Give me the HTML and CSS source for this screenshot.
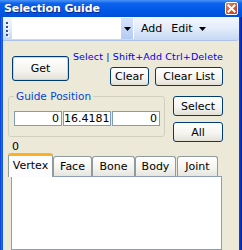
FILE: index.html
```html
<!DOCTYPE html>
<html>
<head>
<meta charset="utf-8">
<link rel="stylesheet" href="styles.css">
</head>
<body>
<div class="win">
  <div class="title">
    <span class="title-text">Selection Guide</span>
    <div class="close">
      <svg width="13" height="13" viewBox="0 0 13 13"><path d="M3.5 3.5 L9.5 9.5 M9.5 3.5 L3.5 9.5" stroke="#fff" stroke-width="2" stroke-linecap="square"/></svg>
    </div>
  </div>
  <div class="frame">
    <div class="bl"></div>
    <div class="client">
      <div class="toolbar">
        <div class="grip"><i></i><i></i><i></i><i></i></div>
        <div class="combo">
          <div class="combo-field"></div>
          <div class="combo-btn"><svg width="7" height="4" viewBox="0 0 7 4"><path d="M0 0H7L3.5 4Z" fill="#000"/></svg></div>
        </div>
        <span class="tb-item">Add</span>
        <span class="tb-item">Edit <svg class="dd" width="7" height="4" viewBox="0 0 7 4"><path d="M0 0H7L3.5 4Z" fill="#000"/></svg></span>
      </div>
      <div class="main">
        <div class="row1">
          <div class="btn get">Get</div>
          <div class="r1-right">
            <div class="hint">Select | Shift+Add Ctrl+Delete</div>
            <div class="btn-row">
              <div class="btn clear">Clear</div>
              <div class="btn clear-list">Clear List</div>
            </div>
          </div>
        </div>
        <div class="row2">
          <div class="left-col">
            <fieldset class="group">
              <legend>Guide Position</legend>
              <div class="fields">
                <div class="field">0</div>
                <div class="field">16.4181</div>
                <div class="field">0</div>
              </div>
            </fieldset>
            <div class="count">0</div>
          </div>
          <div class="side">
            <div class="btn side-btn">Select</div>
            <div class="btn side-btn">All</div>
          </div>
        </div>
        <div class="tabs">
          <div class="tab sel">Vertex</div>
          <div class="tab w-face">Face</div>
          <div class="tab w-bone">Bone</div>
          <div class="tab w-body">Body</div>
          <div class="tab w-joint">Joint</div>
        </div>
        <div class="panel"></div>
      </div>
    </div>
    <div class="br"></div>
  </div>
</div>
</body>
</html>
```
FILE: styles.css
```css
* { box-sizing: border-box; }
html, body { margin: 0; padding: 0; }
body {
  width: 242px; height: 250px; overflow: hidden;
  font-family: "DejaVu Sans", sans-serif; font-size: 10px; color: #000;
}
.win { width: 242px; height: 250px; display: flex; flex-direction: column; }
.title {
  height: 17px; flex: none;
  display: flex; align-items: center; justify-content: space-between;
  padding: 0 4px 0 4px;
  background: linear-gradient(to bottom, #4A93F7 0%, #0C62EC 20%, #0158E6 60%, #0050D8 100%);
}
.title-text {
  color: #fff; font-weight: bold; font-size: 11px; letter-spacing: -0.1px;
  text-shadow: 1px 1px 0 #0A2B8F;
}
.close {
  width: 13px; height: 13px; margin-top: -1px;
  border: 1px solid #fff; border-radius: 2px;
  background: linear-gradient(135deg, #E88A66 0%, #D8572F 50%, #C23B12 100%);
  display: flex;
}
.close svg { display: block; margin: -1px; }
.frame { flex: 1; display: flex; min-height: 0; }
.bl { width: 3px; background: linear-gradient(to right, #0836C8, #1A66F0, #0A55E0); }
.br { width: 3px; background: linear-gradient(to right, #0A50DA, #0832C8, #001C96); }
.client { flex: 1; background: #ECE9D8; display: flex; flex-direction: column; min-width: 0; }
.toolbar {
  height: 24px; flex: none;
  display: flex; align-items: center;
  background: linear-gradient(to bottom, #F3F7FE 0%, #E4EDFB 45%, #C6D8F4 100%);
  border-bottom: 1px solid #AFC3E6;
  border-radius: 0 0 3px 0;
}
.grip { width: 9px; display: flex; flex-direction: column; gap: 2px; padding-left: 3px; }
.grip i { width: 2px; height: 2px; background: #2C4C9C; box-shadow: 1px 1px 0 #fff; display: block; }
.combo { display: flex; width: 122px; height: 21px; margin-left: 0; }
.combo-field { flex: 1; background: #fff; }
.combo-btn {
  width: 13px; display: flex; align-items: center; justify-content: center;
  background: linear-gradient(to bottom, #D6E3FB, #B5CBF4);
  border-right: 1px solid #fff;
}
.combo-btn svg { display: block; }
.tb-item { font-size: 11px; margin-left: 7px; display: flex; align-items: center; }
.tb-item:last-child { margin-left: 9px; }
.tb-item .dd { margin-left: 6px; }
.main { flex: 1; display: flex; flex-direction: column; padding: 0 16px 0 5px; min-height: 0; }
.btn {
  border: 1px solid #003C74; border-radius: 3px;
  background: linear-gradient(to bottom, #FFFFFF 0%, #F4F3EE 60%, #E3E0D6 100%);
  display: flex; align-items: center; justify-content: center;
  font-size: 11px; white-space: nowrap;
}
.row1 { display: flex; margin-top: 10px; }
.get { width: 68px; height: 25px; margin: 5px 0 0 4px; box-shadow: inset 0 0 0 1px #BFD3F2; }
.r1-right { flex: 1; display: flex; flex-direction: column; margin-left: 4px; }
.hint { color: #0000F0; height: 12px; line-height: 12px; white-space: nowrap; font-size: 9.5px; letter-spacing: 0.15px; }
.btn-row { display: flex; justify-content: flex-end; gap: 6px; margin-top: 4px; }
.clear { width: 39px; height: 19px; }
.clear-list { width: 68px; height: 19px; }
.row2 { display: flex; margin-top: 4px; }
.left-col { display: flex; flex-direction: column; }
.group {
  margin: 0; width: 157px;
  border: 1px solid #D0D0BF; border-radius: 3px;
  padding: 9px 4px 10px 5px;
}
.group legend {
  color: #0046D5; font-size: 10.5px; line-height: 12px;
  padding: 0 2px; margin-left: 0;
}
.fields { display: flex; gap: 1px; }
.field {
  width: 48px; height: 15px; background: #fff; border: 1px solid #7F9DB9;
  text-align: right; font-size: 11px; line-height: 13px; padding-right: 2px;
}
.count { font-size: 11px; line-height: 11px; padding-left: 4px; margin-top: 4px; }
.side { display: flex; flex-direction: column; gap: 6px; margin: 6px 0 0 8px; }
.side-btn { width: 50px; height: 20px; }
.tabs { display: flex; align-items: flex-end; padding-left: 0; height: 24px; position: relative; z-index: 1; }
.tab {
  height: 20px; border: 1px solid #919B9C; border-bottom: none;
  border-radius: 3px 3px 0 0;
  background: linear-gradient(to bottom, #FFFFFF, #F3F3EF 60%, #E6E5DD);
  font-size: 11px; display: flex; align-items: center; justify-content: center;
}
.tab.sel {
  width: 45px; height: 24px; background: #FCFCFE;
  border-top: 3px solid #FFB020; margin-bottom: -1px;
  padding-bottom: 2px;
}
.w-face { width: 39px; }
.w-bone { width: 43px; }
.w-body { width: 41px; margin-right: 1px; }
.w-joint { width: 41px; }
.panel {
  flex: 1; margin-left: 3px; margin-right: 1px;
  background: #fff; border: 1px solid #8C9EB8;
}
```
